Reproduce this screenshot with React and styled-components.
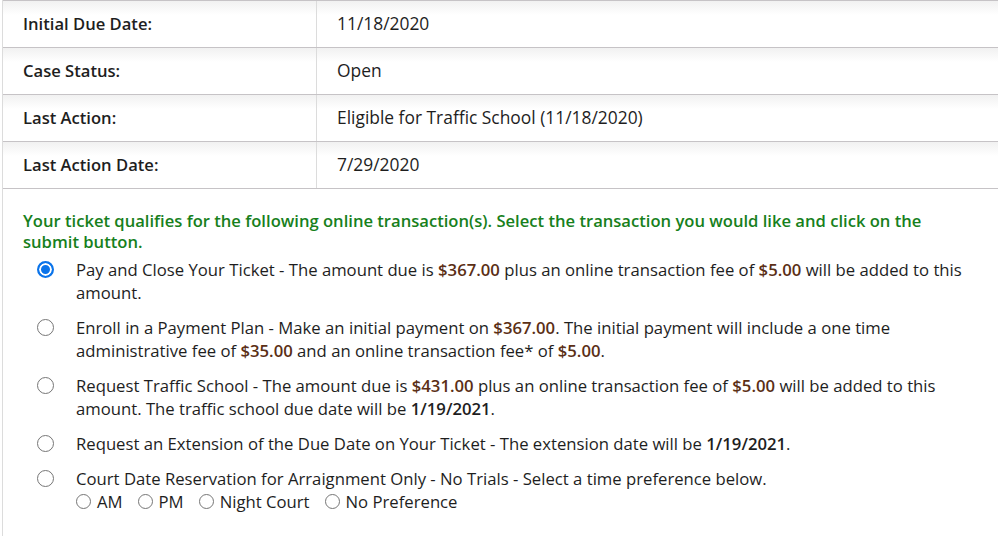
import React from 'react'
import styled, { createGlobalStyle } from 'styled-components'

const GlobalStyle = createGlobalStyle`
  html, body {
    margin: 0;
    padding: 0;
    background: #fff;
    overflow: hidden;
  }
  body {
    font-family: "Open Sans", "Liberation Sans", sans-serif;
    font-size: 16.7px;
    color: #1e1e1e;
  }
`

const Page = styled.div`
  margin-left: 2px;
  border-left: 1px solid #dcdcdc;
  min-height: 536px;
  width: 1030px;
`

const Table = styled.div`
  border-top: 1px solid #c6c3c6;
`

const Row = styled.div`
  display: grid;
  grid-template-columns: 314px 1fr;
  height: 46px;
  border-bottom: 1px solid #c6c3c6;
  background: linear-gradient(#f1f1f1, #fff 14px);
`

const Cell = styled.div`
  display: flex;
  align-items: center;
  padding: 0 0 2px 20px;
  font-size: ${p => (p.$label ? '16.6px' : '17.4px')};
  font-weight: ${p => (p.$label ? 600 : 400)};
  border-right: ${p => (p.$label ? '1px solid #dcdcdc' : 'none')};
`

const Body = styled.div`
  padding: 21px 0 0 20px;
`

const Heading = styled.div`
  color: #17801c;
  font-weight: 600;
  font-size: 16.6px;
  line-height: 21px;
  width: 940px;
`

const Options = styled.div`
  display: flex;
  flex-direction: column;
  gap: 12px;
  margin-top: 6px;
  padding-left: 14px;
`

const Option = styled.label`
  display: flex;
  align-items: flex-start;
  gap: 22px;
  line-height: 23px;
`

const Radio = styled.input.attrs({ type: 'radio' })`
  appearance: none;
  flex: none;
  margin: 3px 0 0 0;
  width: 17px;
  height: 17px;
  border-radius: 50%;
  border: 1px solid #767676;
  background: #fff;
  &:checked {
    border: 2px solid #0b74ea;
    background: #0b74ea;
    box-shadow: inset 0 0 0 2px #fff;
  }
`

const Text = styled.div`
  width: 895px;
`

const Amount = styled.b`
  color: #5b2f16;
  font-weight: 600;
`

const Strong = styled.b`
  font-weight: 600;
`

const Times = styled.div`
  display: flex;
  gap: 15px;
`

const TimeChoice = styled.label`
  display: flex;
  align-items: center;
  gap: 6px;
`

const SmallRadio = styled.input.attrs({ type: 'radio' })`
  appearance: none;
  margin: 0;
  width: 15px;
  height: 15px;
  border-radius: 50%;
  border: 1px solid #767676;
  background: #fff;
`

const rows = [
  ['Initial Due Date:', '11/18/2020'],
  ['Case Status:', 'Open'],
  ['Last Action:', 'Eligible for Traffic School (11/18/2020)'],
  ['Last Action Date:', '7/29/2020'],
]

export default function App() {
  return (
    <Page>
      <GlobalStyle />
      <Table>
        {rows.map(([label, value]) => (
          <Row key={label}>
            <Cell $label>{label}</Cell>
            <Cell>{value}</Cell>
          </Row>
        ))}
      </Table>
      <Body>
        <Heading>
          Your ticket qualifies for the following online transaction(s). Select the transaction you would like and click on the submit button.
        </Heading>
        <Options>
          <Option>
            <Radio name="tx" defaultChecked />
            <Text>
              Pay and Close Your Ticket - The amount due is <Amount>$367.00</Amount> plus an online transaction fee of <Amount>$5.00</Amount> will be added to this amount.
            </Text>
          </Option>
          <Option>
            <Radio name="tx" />
            <Text>
              Enroll in a Payment Plan - Make an initial payment on <Amount>$367.00</Amount>. The initial payment will include a one time administrative fee of <Amount>$35.00</Amount> and an online transaction fee* of <Amount>$5.00</Amount>.
            </Text>
          </Option>
          <Option>
            <Radio name="tx" />
            <Text>
              Request Traffic School - The amount due is <Amount>$431.00</Amount> plus an online transaction fee of <Amount>$5.00</Amount> will be added to this amount. The traffic school due date will be <Strong>1/19/2021</Strong>.
            </Text>
          </Option>
          <Option>
            <Radio name="tx" />
            <Text>
              Request an Extension of the Due Date on Your Ticket - The extension date will be <Strong>1/19/2021</Strong>.
            </Text>
          </Option>
          <Option>
            <Radio name="tx" />
            <Text>
              Court Date Reservation for Arraignment Only - No Trials - Select a time preference below.
              <Times>
                {['AM', 'PM', 'Night Court', 'No Preference'].map(t => (
                  <TimeChoice key={t}>
                    <SmallRadio name="time" />
                    {t}
                  </TimeChoice>
                ))}
              </Times>
            </Text>
          </Option>
        </Options>
      </Body>
    </Page>
  )
}
